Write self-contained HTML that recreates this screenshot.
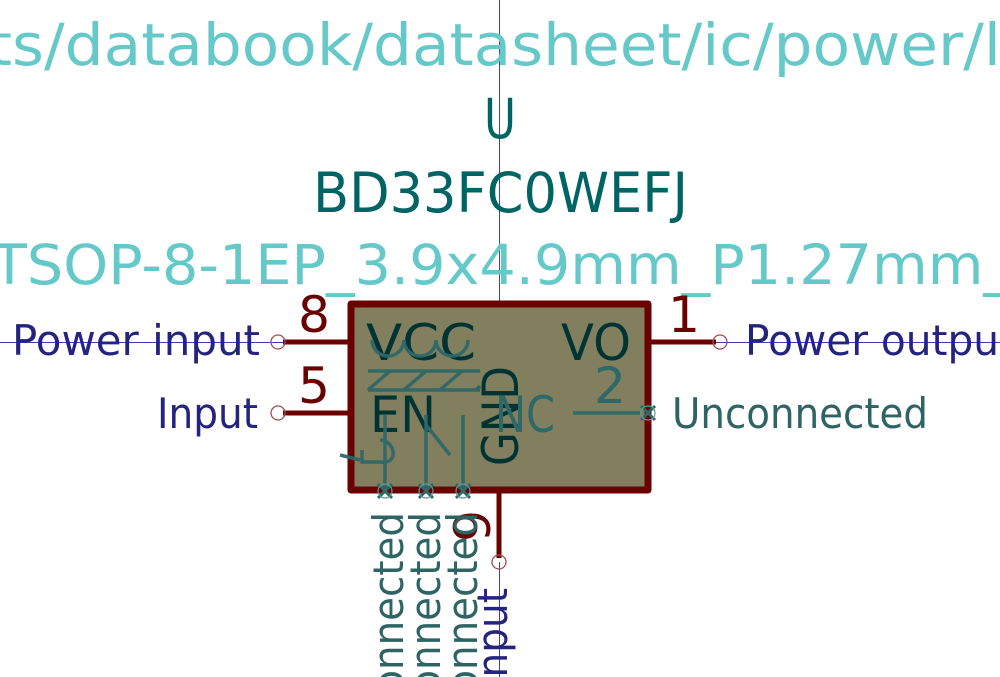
<!DOCTYPE html>
<html><head><meta charset="utf-8"><style>
html,body{margin:0;padding:0;background:#fff;width:1000px;height:677px;overflow:hidden}
svg{display:block;overflow:hidden}
text{font-family:"DejaVu Sans","Liberation Sans",sans-serif}
</style></head><body>
<svg width="1000" height="677" viewBox="0 0 1000 677" xmlns="http://www.w3.org/2000/svg">
<rect width="1000" height="677" fill="#fff"/>
<line x1="499.5" y1="0" x2="499.5" y2="304" stroke="#4040a8" stroke-width="1"/>
<line x1="0" y1="342.5" x2="1000" y2="342.5" stroke="#4040a8" stroke-width="1"/>
<line x1="499.5" y1="562" x2="499.5" y2="677" stroke="#4040a8" stroke-width="1"/>
<text x="-12" y="65" font-size="58" fill="#66c9c9" textLength="1030" lengthAdjust="spacingAndGlyphs">ts/databook/datasheet/ic/power/li</text>
<text x="484" y="138" font-size="55" fill="#006464" textLength="32" lengthAdjust="spacingAndGlyphs">U</text>
<text x="313" y="212" font-size="55" fill="#006464" textLength="375" lengthAdjust="spacingAndGlyphs">BD33FC0WEFJ</text>
<text x="-8" y="284" font-size="55" fill="#66c9c9" textLength="1020" lengthAdjust="spacingAndGlyphs">TSOP-8-1EP_3.9x4.9mm_P1.27mm_</text>
<g stroke="#6a0000" stroke-width="5">
<line x1="283" y1="342" x2="351" y2="342"/>
<line x1="283" y1="413" x2="351" y2="413"/>
<line x1="648" y1="342" x2="716" y2="342"/>
<line x1="499" y1="490" x2="499" y2="558"/>
</g>
<g fill="none" stroke="#a05050" stroke-width="1.3">
<circle cx="278" cy="342" r="7"/><circle cx="278" cy="413" r="7"/>
<circle cx="720" cy="342" r="7"/><circle cx="499" cy="562" r="7"/>
</g>
<rect x="351" y="304" width="297" height="186" fill="#817f5e" stroke="#6a0000" stroke-width="7" stroke-linejoin="round"/>
<g fill="#6a0000" font-size="50">
<text x="298" y="332" textLength="32" lengthAdjust="spacingAndGlyphs">8</text>
<text x="298" y="403" textLength="32" lengthAdjust="spacingAndGlyphs">5</text>
<text x="668" y="332" textLength="32" lengthAdjust="spacingAndGlyphs">1</text>
<text transform="translate(490,542) rotate(-90)" textLength="32" lengthAdjust="spacingAndGlyphs">9</text>
</g>
<g fill="#003434" font-size="50">
<text x="366" y="360" textLength="110" lengthAdjust="spacingAndGlyphs">VCC</text>
<text x="561" y="360" textLength="70" lengthAdjust="spacingAndGlyphs">VO</text>
<text x="370" y="432" textLength="66" lengthAdjust="spacingAndGlyphs">EN</text>
<text transform="translate(518,466) rotate(-90)" textLength="100" lengthAdjust="spacingAndGlyphs">GND</text>
</g>
<g fill="none" stroke="#2e6868" stroke-width="3.5" opacity="0.95">
<path d="M372 340 a16 16 0 1 0 32 0 M404 340 a16 16 0 1 0 32 0 M436 340 a16 16 0 1 0 32 0"/>
<path d="M368 371 H480 M368 390 H480 M368 390 L390 371 M404 390 L426 371 M440 390 L462 371 M476 390 L480 386"/>
<path d="M385 415 V490 M426 415 V490 M463 415 V490 M426 425 L450 455 M340 455 L360 460"/>
<path d="M362 450 V462 H380 M380 440 C395 440 400 465 380 462"/>
<path d="M573 413 H640"/>
</g>
<g fill="#2e6868" font-size="50">
<text x="495" y="432" textLength="60" lengthAdjust="spacingAndGlyphs">NC</text>
<text x="594" y="403" textLength="32" lengthAdjust="spacingAndGlyphs">2</text>
</g>
<g stroke="#2e6868" stroke-width="3">
<path d="M641 406 l14 14 M655 406 l-14 14"/>
<path d="M378 484 l14 14 M392 484 l-14 14"/>
<path d="M419 484 l14 14 M433 484 l-14 14"/>
<path d="M456 484 l14 14 M470 484 l-14 14"/>
</g>
<g fill="none" stroke="#5a9a9a" stroke-width="1.2">
<circle cx="648" cy="413" r="7"/><circle cx="385" cy="491" r="7"/><circle cx="426" cy="491" r="7"/><circle cx="463" cy="491" r="7"/>
</g>
<g fill="#24247e" font-size="42">
<text x="12" y="355" textLength="248" lengthAdjust="spacingAndGlyphs">Power input</text>
<text x="157" y="428" textLength="101" lengthAdjust="spacingAndGlyphs">Input</text>
<text x="745" y="355" textLength="270" lengthAdjust="spacingAndGlyphs">Power output</text>
<text transform="translate(507,588) rotate(-90)" text-anchor="end" textLength="101" lengthAdjust="spacingAndGlyphs">Input</text>
</g>
<g fill="#2e6464" font-size="42">
<text x="672" y="428" textLength="256" lengthAdjust="spacingAndGlyphs">Unconnected</text>
<text transform="translate(403,512) rotate(-90)" text-anchor="end" textLength="256" lengthAdjust="spacingAndGlyphs">Unconnected</text>
<text transform="translate(440,512) rotate(-90)" text-anchor="end" textLength="256" lengthAdjust="spacingAndGlyphs">Unconnected</text>
<text transform="translate(477,512) rotate(-90)" text-anchor="end" textLength="256" lengthAdjust="spacingAndGlyphs">Unconnected</text>
</g>
</svg>
</body></html>
